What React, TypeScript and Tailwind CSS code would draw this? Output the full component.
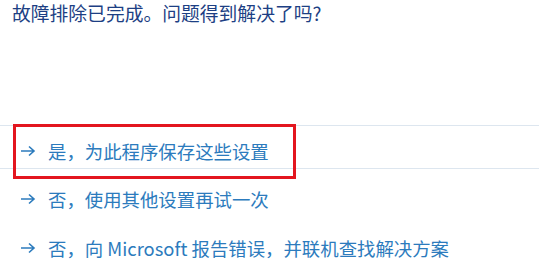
const rowText = 'flex items-center gap-[12px] text-[18.4px] leading-[24px] text-[#2c7bbd]'

function Arrow() {
  return (
    <svg width="16" height="12" viewBox="0 0 16 12" className="shrink-0">
      <path d="M1 6h13M9 1.5L14 6l-5 4.5" fill="none" stroke="#2c7bbd" strokeWidth="1.6" />
    </svg>
  )
}

const options = [
  '是，为此程序保存这些设置',
  '否，使用其他设置再试一次',
  '否，向 Microsoft 报告错误，并联机查找解决方案',
]

export default function App() {
  return (
    <div className="relative w-[539px] h-[265px] bg-white overflow-hidden font-['Noto_Sans_CJK_SC','Noto_Sans',sans-serif]">
      <h1 className="pl-[12px] text-[18.8px] leading-[25px] font-normal text-[#1d3f84]">
        故障排除已完成。问题得到解决了吗?
      </h1>

      <div className="mt-[100px] flex flex-col">
        <div className={`${rowText} h-[44px] pl-[20px] pt-[8px] border-y border-[#dde6ef]`}>
          <Arrow />
          <span>{options[0]}</span>
        </div>
        <div className={`${rowText} h-[24px] pl-[20px] mt-[18px]`}>
          <Arrow />
          <span>{options[1]}</span>
        </div>
        <div className={`${rowText} h-[24px] pl-[20px] mt-[25px]`}>
          <Arrow />
          <span>{options[2]}</span>
        </div>
      </div>

      {/* annotation box */}
      <div className="absolute left-[13px] top-[124px] w-[283px] h-[55px] border-[3px] border-[#e3161f]" />
    </div>
  )
}
